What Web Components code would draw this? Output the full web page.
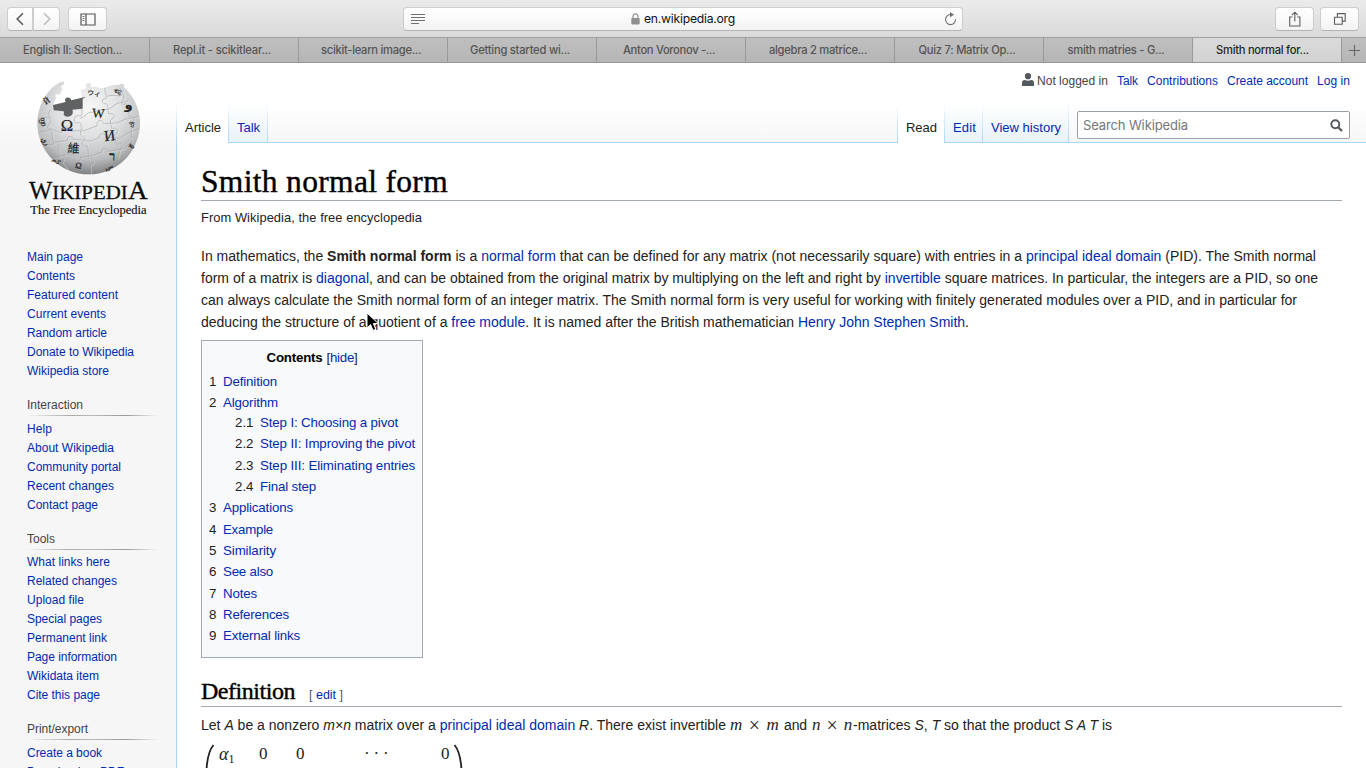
<!DOCTYPE html>
<html lang="en">
<head>
<meta charset="utf-8">
<title>Smith normal form - Wikipedia</title>
<style>
html,body{margin:0;height:768px;overflow:hidden;background:#fff}
body{font-family:"Liberation Sans",Arial,sans-serif;font-size:14px;color:#222}
wiki-link{color:#002bb0}
</style>
</head>
<body>
<browser-chrome></browser-chrome>
<wiki-page></wiki-page>
<mouse-pointer></mouse-pointer>
<script>
const define = (name, html, init) => customElements.define(name, class extends HTMLElement {
  connectedCallback() {
    if (this.shadowRoot) return;
    const root = this.attachShadow({mode: 'open'});
    const t = document.createElement('template');
    t.innerHTML = typeof html === 'function' ? html(this) : html;
    root.append(t.content.cloneNode(true));
    if (init) init(this, root);
  }
});

/* A line of text tracked so that it fills the width given in "w". */
define('fit-line', '<style>:host{display:block;white-space:nowrap;width:max-content}</style><slot></slot>', el => {
  const w = +el.getAttribute('w');
  if (!w) return;
  const n = el.textContent.length;
  const natural = el.getBoundingClientRect().width;
  if (natural) el.style.letterSpacing = ((w - natural) / n).toFixed(4) + 'px';
});
define('wiki-link', '<style>:host{display:inline;color:#002bb0;cursor:pointer}</style><slot></slot>');

define('tool-button', `<style>
:host{display:flex;align-items:center;justify-content:center;box-sizing:border-box;height:24px;border:1px solid #cdcdcd;border-bottom-color:#b4b4b4;border-radius:4px;background:linear-gradient(#fff,#f3f3f3)}
</style><slot></slot>`);

define('browser-tab', el => `<style>
:host{display:flex;justify-content:center;align-items:center;box-sizing:border-box;width:149px;height:24px;padding-right:4px;background:linear-gradient(#bfbfbf,#b5b5b5);color:#555;font:500 11.2px/24px Inter,sans-serif}
:host(:not(:first-child)){border-left:1px solid #999}
:host([active]){background:linear-gradient(#dadada,#d2d2d2);color:#262626;padding-right:9px}
</style><fit-line w="${el.getAttribute('w')}">${el.getAttribute('label')}</fit-line>`);

define('browser-chrome', `<style>
:host{display:block;height:63px;font-family:Inter,sans-serif}
.bar{box-sizing:border-box;height:38px;border-bottom:1px solid #a0a0a0;background:linear-gradient(#ebebeb,#dadada);display:grid;grid-template-columns:403px 560px 1fr;align-items:start;padding-top:7px}
.left{display:flex;padding-left:7px}
.left tool-button{width:27px}
.left tool-button:nth-child(1){border-radius:4px 0 0 4px;width:26px}
.left tool-button:nth-child(2){border-radius:0 4px 4px 0}
.left tool-button:nth-child(3){width:39px;margin-left:8px}
.right{display:flex;justify-content:flex-end;gap:6px;padding-right:7px}
.right tool-button{width:39px}
.url{display:grid;grid-template-columns:27px 1fr 22px;align-items:center;width:556px;font-size:12.2px;color:#111}
.url svg{display:block;justify-self:center}
.host{display:flex;justify-content:center;align-items:center;gap:4px;line-height:22px;padding-right:5px}
.tabs{display:flex;box-sizing:border-box;height:25px;border-bottom:1px solid #979797}
.plus{flex:1;border-left:1px solid #999;background:linear-gradient(#bfbfbf,#b5b5b5);display:flex;align-items:center;justify-content:center}
svg{fill:none}
</style>
<div class="bar">
 <div class="left">
  <tool-button><svg width="10" height="14"><path d="M8 1.2 2.2 7 8 12.8" stroke="#5c5c5c" stroke-width="1.6"/></svg></tool-button>
  <tool-button><svg width="10" height="14"><path d="M2 1.2 7.8 7 2 12.8" stroke="#bcbcbc" stroke-width="1.6"/></svg></tool-button>
  <tool-button><svg width="16" height="13"><path d="M1 1h14v11H1zM6 1v11" stroke="#555" stroke-width="1.2"/><path d="M2.5 3.5h2M2.5 5.5h2M2.5 7.5h2" stroke="#666" stroke-width=".9"/></svg></tool-button>
 </div>
 <tool-button><div class="url">
  <svg width="15" height="12"><path d="M0 1.5h14M0 4.5h14M0 7.5h14M0 10.5h8" stroke="#707070" stroke-width="1"/></svg>
  <div class="host"><svg width="9" height="12"><rect x=".3" y="5" width="8.4" height="6.4" rx=".8" fill="#909090"/><path d="M2 5.5V3.4a2.5 2.5 0 0 1 5 0v2.1" stroke="#909090" stroke-width="1.2"/></svg><fit-line w="91">en.wikipedia.org</fit-line></div>
  <svg width="13" height="14"><path d="M7 2.6A5 5 0 1 0 11.5 7.3" stroke="#707070" stroke-width="1.1"/><path d="M6 0 10 2.7 6 5.2z" fill="#707070"/></svg>
 </div></tool-button>
 <div class="right">
  <tool-button><svg width="14" height="17"><path d="M4.4 6H1.7v9h10.2V6H9.2M6.8 10.5V1.5M3.8 4.2l3-3 3 3" stroke="#5c5c5c" stroke-width="1.1"/></svg></tool-button>
  <tool-button><svg width="14" height="14"><path d="M1.5 5.3h7.7v7H1.5zM4.4 5.2V1.6h7.8v7.5H9.3" stroke="#5c5c5c" stroke-width="1.1"/></svg></tool-button>
 </div>
</div>
<div class="tabs">
 <browser-tab w="99" label="English II: Section..."></browser-tab><browser-tab w="98" label="Repl.it - scikitlear..."></browser-tab><browser-tab w="100" label="scikit-learn image..."></browser-tab><browser-tab w="100" label="Getting started wi..."></browser-tab><browser-tab w="92" label="Anton Voronov -..."></browser-tab><browser-tab w="98" label="algebra 2 matrice..."></browser-tab><browser-tab w="97" label="Quiz 7: Matrix Op..."></browser-tab><browser-tab w="97" label="smith matries - G..."></browser-tab><browser-tab active w="93" label="Smith normal for..."></browser-tab>
 <div class="plus"><svg width="11" height="11"><path d="M5.5 0v11M0 5.5h11" stroke="#666" stroke-width="1.1"/></svg></div>
</div>`);

define('wiki-logo', `<style>:host{display:block;width:130px;height:145px}svg{display:block;font-family:"Liberation Serif",serif}</style>
<svg width="130" height="145" viewBox="0 0 390 435">
<defs><radialGradient id="g" cx=".5" cy=".28" r=".72"><stop offset="0" stop-color="#f7f7f7"/><stop offset=".45" stop-color="#dedfe0"/><stop offset=".78" stop-color="#bcbdbe"/><stop offset="1" stop-color="#808182"/></radialGradient>
<clipPath id="c"><path d="M118 19C112 22 104 20 98 26 65 45 37 94 37 145a154 153 0 0 0 308 0C345 100 325 62 296 36 300 27 290 24 283 29L262 31 234 39C222 42 218 34 210 35L198 37C203 25 190 20 183 27 179 34 187 38 180 42L167 45 171 67 172 98 140 104C149 125 124 130 117 121 114 114 120 113 115 109L86 105 84 90 94 68C86 60 96 54 104 60L112 42C106 35 110 29 116 29z"/></clipPath></defs>
<path d="M118 19C112 22 104 20 98 26 65 45 37 94 37 145a154 153 0 0 0 308 0C345 100 325 62 296 36 300 27 290 24 283 29L262 31 234 39C222 42 218 34 210 35L198 37C203 25 190 20 183 27 179 34 187 38 180 42L167 45 171 67 172 98 140 104C149 125 124 130 117 121 114 114 120 113 115 109L86 105 84 90 94 68C86 60 96 54 104 60L112 42C106 35 110 29 116 29z" fill="url(#g)"/>
<path d="M84 90 122 81C114 66 136 62 139 76L183 65 173 72 173 101 142 104C150 124 124 130 117 121 114 114 120 113 115 109L86 106z" fill="#606162"/>
<g clip-path="url(#c)" fill="none" stroke-linejoin="round">
<g id="lines" stroke="#999a9c" stroke-width="1.8">
<path d="M75 105C65 125 84 132 76 145 64 150 68 167 78 162 84 178 80 190 88 204 101 201 108 213 99 222L106 245C119 243 121 258 112 262L135 290"/>
<path d="M172 98C168 111 176 119 165 124 148 115 141 140 156 145 169 137 171 154 168 169 161 187 183 184 180 196 165 202 173 220 187 213 193 226 188 239 192 252 209 250 212 267 197 270L199 298"/>
<path d="M240 39C238 55 249 61 242 72 229 69 229 87 241 87 251 83 248 104 251 117 268 111 274 126 260 133 252 139 259 149 261 161 277 154 286 173 268 180L276 209C292 201 300 216 286 223L279 252"/>
<path d="M285 40C292 57 301 61 295 75 285 80 293 94 303 86 311 99 312 112 313 125 326 120 331 137 320 143L321 189C333 185 336 201 324 207"/>
<path d="M39 132C56 125 67 129 77 130M166 130C185 125 184 111 202 112 216 105 230 106 249 104 269 95 270 81 292 84L311 76"/>
<path d="M41 174C55 167 61 172 73 165 91 161 97 177 113 170 110 153 131 151 132 165 144 174 157 163 168 169 188 166 202 156 218 153 209 135 237 131 235 146L261 145C281 147 297 130 316 130L342 125"/>
<path d="M59 210C67 207 76 216 88 204 104 196 118 201 128 196 124 181 147 181 144 193L180 196C200 203 214 191 224 188 221 171 245 175 241 187L275 190C291 193 301 174 319 171L342 162"/>
<path d="M84 249C96 244 104 250 111 244 129 235 138 242 151 246 151 264 170 261 166 248L194 244C211 244 220 232 232 233 227 216 249 218 246 230L289 223C305 222 312 203 326 198"/>
<path d="M105 60C115 54 125 62 123 77M247 64C270 57 278 67 291 61"/>
</g><use href="#lines" transform="translate(2,2)" opacity=".5" style="filter:brightness(2)"/>
</g>
<g fill="#222" stroke="#222" stroke-width=".5">
<text x="107" y="169" font-size="50">Ω</text><text x="201" y="128" font-size="40" transform="rotate(4 222 115)">W</text><text x="237" y="197" font-size="46" transform="rotate(-7 255 180)">И</text>
<text x="128" y="233" font-size="36" font-family="Noto Sans CJK TC" transform="rotate(4 146 220)">維</text>
<text x="252" y="256" font-size="38" font-weight="bold" transform="rotate(4 260 240)">ר</text>
<text x="187" y="62" font-size="20" font-family="Noto Sans CJK JP" transform="rotate(8 204 56)">ウィ</text>
<text x="299" y="102" font-size="38" font-weight="bold" font-family="DejaVu Sans">و</text>
<text x="56" y="86" font-size="25" transform="rotate(-35 66 78)">Й</text>
<text x="43" y="146" font-size="22" transform="rotate(80 55 138)">ფი</text>
<text x="49" y="205" font-size="22" transform="rotate(55 60 198)">ري</text>
<text x="267" y="54" font-size="22" transform="rotate(35 276 44)">ණ</text>
<text x="84" y="263" font-size="19" transform="rotate(38 93 257)">کم</text>
<text x="151" y="280" font-size="26" transform="rotate(12 160 272)">Ω</text>
<text x="313" y="155" font-size="18" transform="rotate(-75 322 150)">மி</text>
<text x="312" y="219" font-size="21" transform="rotate(-55 321 211)">ह</text>
<text x="241" y="286" font-size="17" transform="rotate(-20 254 280)">አም</text>
</g>
<g fill="#0b0b0b" stroke="#0b0b0b" stroke-width=".8"><text x="12" y="372" font-size="76" textLength="70" lengthAdjust="spacingAndGlyphs">W</text><text x="82" y="372" font-size="59" textLength="226" lengthAdjust="spacingAndGlyphs">IKIPEDI</text><text x="309" y="372" font-size="76" textLength="59" lengthAdjust="spacingAndGlyphs">A</text>
<text x="16" y="417" font-size="38" stroke-width=".4" textLength="349" lengthAdjust="spacingAndGlyphs">The Free Encyclopedia</text></g>
</svg>`);

define('nav-portal', el => {
  const title = el.getAttribute('heading');
  const items = el.getAttribute('items').split('|').map(s => s.split(':'));
  return `<style>
:host{display:block;font-size:12px;margin-bottom:15px}
h3{margin:0;font-weight:normal;font-size:12px;height:19px;color:#444}
hr{height:1px;border:0;margin:0 0 4px;width:131px;background:linear-gradient(to right,rgba(150,150,150,0) 0,#aaa 33%,#bbb 50%,#999 75%,rgba(150,150,150,0) 100%)}
:host([tight]) hr{margin-bottom:3px}
fit-line{height:19px;line-height:19px}
h3 fit-line{line-height:18px}
</style>${title ? `<h3><fit-line w="${el.getAttribute('hw')}">${title}</fit-line></h3><hr>` : ''}${items.map(([t, w]) => `<fit-line w="${w}"><wiki-link>${t}</wiki-link></fit-line>`).join('')}`;
});

define('wiki-sidebar', `<style>
:host{display:block;width:176px;height:705px;overflow:hidden;background:linear-gradient(#fff 40px,#f6f6f6 80px)}
wiki-logo{margin:12px 0 28px 25px}
nav{padding-left:27px;margin:0}
</style><wiki-logo></wiki-logo><nav>
<nav-portal items="Main page:56|Contents:48|Featured content:91|Current events:79|Random article:80|Donate to Wikipedia:107|Wikipedia store:82"></nav-portal>
<nav-portal heading="Interaction" hw="56" items="Help:25|About Wikipedia:87|Community portal:94|Recent changes:87|Contact page:71"></nav-portal>
<nav-portal tight heading="Tools" hw="28" items="What links here:83|Related changes:90|Upload file:57|Special pages:75|Permanent link:80|Page information:90|Wikidata item:72|Cite this page:73"></nav-portal>
<nav-portal heading="Print/export" hw="61" items="Create a book:75|Download as PDF:97"></nav-portal>
</nav>`);

define('page-tab', el => `<style>
:host{display:block;box-sizing:border-box;height:40px;border-right:1px solid;border-image:linear-gradient(rgba(167,215,249,0),#a7d7f9) 1;border-left:0;border-top:0;border-bottom:0}
div{box-sizing:border-box;height:40px;border-bottom:1px solid #a7d7f9;padding:15px 0 0 8px;background:linear-gradient(#fff,#e8f2f8);font-size:13px;line-height:20px}
:host([active]) div{background:#fff;border-bottom-color:#fff;color:#222}
</style><div><fit-line w="${el.getAttribute('w')}"><slot></slot></fit-line></div>`, (el, root) => {
  const f = root.querySelector('fit-line'), w = +el.getAttribute('w');
  f.style.letterSpacing = ((w - f.getBoundingClientRect().width) / el.textContent.length) + 'px';
});

define('wiki-header', `<style>
:host{display:block;height:80px;background:linear-gradient(#fff 40px,#f6f6f6 80px)}
.me{display:flex;justify-content:flex-end;height:40px;font-size:12px;line-height:36px;padding-right:16px;gap:9px;box-sizing:border-box;color:#444}
.user{display:flex;gap:3px}
.user svg{margin-top:10px}
.row{display:flex;height:40px}
.edge{width:1px;background:linear-gradient(rgba(167,215,249,0),#a7d7f9)}
.fill{flex:1;border-bottom:1px solid #a7d7f9}
.search{width:297px;box-sizing:border-box;border-bottom:1px solid #a7d7f9;padding:8px 16px 0 8px}
.box{display:flex;align-items:center;justify-content:space-between;box-sizing:border-box;height:28px;border:1px solid #9aa0a8;border-radius:2px;background:rgba(255,255,255,.9);padding:0 6px 0 5px;color:#72777d;font-size:13px}
.box fit-line{font-family:Inter,sans-serif}
</style>
<div class="me"><div class="user"><svg width="12" height="13" fill="#54595d"><circle cx="6" cy="3.2" r="3.1"/><path d="M0 13V9.8Q0 7.2 2.8 7Q6 8.4 9.2 7Q12 7.2 12 9.8V13z"/></svg><fit-line w="71">Not logged in</fit-line></div>
<fit-line w="21"><wiki-link>Talk</wiki-link></fit-line><fit-line w="71"><wiki-link>Contributions</wiki-link></fit-line><fit-line w="81"><wiki-link>Create account</wiki-link></fit-line><fit-line w="33"><wiki-link>Log in</wiki-link></fit-line></div>
<div class="row"><div class="edge"></div>
<page-tab active w="36" style="width:52px">Article</page-tab><page-tab w="23" style="width:39px"><wiki-link>Talk</wiki-link></page-tab>
<div class="fill"></div><div class="edge"></div>
<page-tab active w="31" style="width:47px">Read</page-tab><page-tab w="23" style="width:38px"><wiki-link>Edit</wiki-link></page-tab><page-tab w="70" style="width:86px"><wiki-link>View history</wiki-link></page-tab>
<div class="search"><div class="box"><fit-line w="105">Search Wikipedia</fit-line><svg width="13" height="13" fill="none" stroke="#54595d"><circle cx="5.3" cy="5.3" r="4" stroke-width="1.9"/><path d="M8.2 8.2 12 12" stroke-width="2.3"/></svg></div></div></div>`);

define('toc-entry', el => `<style>
:host{display:flex;height:21.17px;line-height:21.17px;font-size:13.3px;padding-left:7px}
:host([sub]){padding-left:33px}
span{width:14px;color:#222}:host([sub]) span{width:25px}
</style><span>${el.getAttribute('n')}</span><fit-line w="${el.getAttribute('w')}"><wiki-link>${el.getAttribute('label')}</wiki-link></fit-line>`);

define('wiki-toc', `<style>
:host{display:block;box-sizing:border-box;width:222px;height:318px;border:1px solid #a2a9b1;background:#f8f9fa;padding-top:6px;color:#222}
.t{display:flex;justify-content:center;gap:4px;font-size:13.3px;line-height:21px;height:24px}b{color:#000}
.up{margin-top:-1px}.down{margin-top:1px}
</style><div class="t"><fit-line w="56"><b>Contents</b></fit-line><fit-line w="31">[<wiki-link>hide</wiki-link>]</fit-line></div>
<toc-entry n="1" w="54" label="Definition"></toc-entry><toc-entry n="2" w="55" label="Algorithm"></toc-entry>
<toc-entry sub class="up" n="2.1" w="138" label="Step I: Choosing a pivot"></toc-entry><toc-entry sub n="2.2" w="155" label="Step II: Improving the pivot"></toc-entry><toc-entry sub n="2.3" w="155" label="Step III: Eliminating entries"></toc-entry><toc-entry sub n="2.4" w="56" label="Final step"></toc-entry>
<toc-entry n="3" w="70" label="Applications"></toc-entry><toc-entry class="down" n="4" w="50" label="Example"></toc-entry><toc-entry n="5" w="53" label="Similarity"></toc-entry><toc-entry n="6" w="50" label="See also"></toc-entry><toc-entry n="7" w="34" label="Notes"></toc-entry><toc-entry n="8" w="66" label="References"></toc-entry><toc-entry n="9" w="77" label="External links"></toc-entry>`);

define('matrix-row', `<style>
:host{display:grid;grid-template-columns:18px 36px 37px 67px 78px 12px 10px;width:262px;height:25px;font:17px/22px "Liberation Serif",serif;color:#222;padding-left:4px;overflow:hidden}
svg{display:block;fill:none;stroke:#222}
i{font-size:18px;line-height:0}sub{font-size:12px;line-height:0;vertical-align:-3px}
span{white-space:nowrap}
.a{margin:1px 0 0 -4px}.dots{letter-spacing:3.8px;margin-left:1px}
</style>
<svg width="14" height="25"><path d="M8.5 2Q2.5 9 1.5 27" stroke-width="1.8"/></svg>
<span class="a"><i>α</i><sub>1</sub></span><span>0</span><span>0</span><span class="dots">···</span><span>0</span>
<svg width="12" height="25"><path d="M1.5 2Q7.5 9 8.5 27" stroke-width="1.8"/></svg>`);

define('wiki-article', `<style>
:host{display:block;box-sizing:border-box;height:625px;overflow:hidden;background:#fff;border-left:1px solid #a7d7f9;padding:0 24px}
h1,h2{margin:0;font-family:"Liberation Serif",serif;font-weight:normal;color:#000;box-sizing:border-box;border-bottom:1px solid #a2a9b1;-webkit-text-stroke:.4px #000}
h1{height:58px;padding-top:21px;font-size:31.5px;line-height:36px}
h2{height:49px;padding-top:19px;font-size:24px;line-height:28px;display:flex;gap:14px}
h2 .e{font-family:"Liberation Sans",sans-serif;font-size:12.5px;line-height:36px;color:#54595d;-webkit-text-stroke:0}
.sub{font-size:12.9px;line-height:22px;padding:6px 0 16px;color:#222}
p{margin:0;font-size:14px;line-height:22px;height:22px}
.para{margin-bottom:7px;height:88px}
.flow{display:flex;align-items:baseline;padding-top:7px;margin-bottom:7px}
.flow fit-line{white-space:pre}
.flow .math{font:italic 17px/22px "Liberation Serif",serif}
.math span{font-style:normal;font-size:20px;line-height:0;vertical-align:-2px}
</style>
<h1><fit-line w="247">Smith normal form</fit-line></h1>
<div class="sub"><fit-line w="221">From Wikipedia, the free encyclopedia</fit-line></div>
<p class="para">
<fit-line w="1115">In mathematics, the <b>Smith normal form</b> is a <wiki-link>normal form</wiki-link> that can be defined for any matrix (not necessarily square) with entries in a <wiki-link>principal ideal domain</wiki-link> (PID). The Smith normal</fit-line>
<fit-line w="1117">form of a matrix is <wiki-link>diagonal</wiki-link>, and can be obtained from the original matrix by multiplying on the left and right by <wiki-link>invertible</wiki-link> square matrices. In particular, the integers are a PID, so one</fit-line>
<fit-line w="1096">can always calculate the Smith normal form of an integer matrix. The Smith normal form is very useful for working with finitely generated modules over a PID, and in particular for</fit-line>
<fit-line w="768">deducing the structure of a quotient of a <wiki-link>free module</wiki-link>. It is named after the British mathematician <wiki-link>Henry John Stephen Smith</wiki-link>.</fit-line></p>
<wiki-toc></wiki-toc>
<h2><fit-line w="94">Definition</fit-line><fit-line class="e" w="34">[ <wiki-link>edit</wiki-link> ]</fit-line></h2>
<p class="flow"><fit-line w="525">Let <i>A</i> be a nonzero <i>m×n</i> matrix over a <wiki-link>principal ideal domain</wiki-link> <i>R</i>. There exist invertible</fit-line><fit-line w="50" class="math" style="margin-left:4px">m <span>×</span> m</fit-line><fit-line w="23" style="margin:0 5px 0 4px">and</fit-line><fit-line w="41" class="math">n <span>×</span> n</fit-line><fit-line w="259">-matrices <i>S</i>, <i>T</i> so that the product <i>S A T</i> is</fit-line></p>
<matrix-row></matrix-row>`);

define('wiki-page', `<style>:host{display:grid;grid-template-columns:176px 1fr;height:705px}</style>
<wiki-sidebar></wiki-sidebar><main><wiki-header></wiki-header><wiki-article></wiki-article></main>`);

define('mouse-pointer', `<style>:host{position:absolute;left:366px;top:312px;width:13px;height:20px}svg{display:block}</style>
<svg width="13" height="20"><path d="M1 1v15l3.6-3.4 2.4 5.8 2.8-1.2-2.4-5.6h5z" fill="#000" stroke="#fff"/></svg>`);
</script>
</body>
</html>
